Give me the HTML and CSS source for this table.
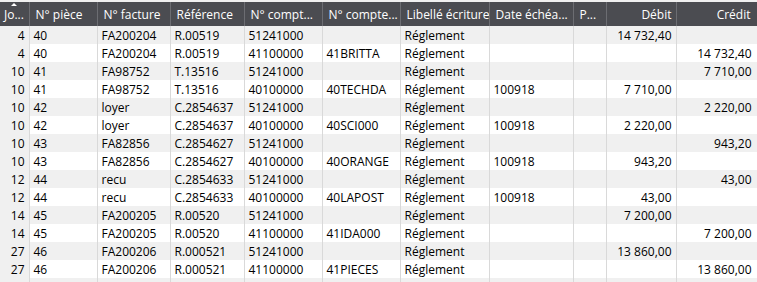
FILE: index.html
```html
<!DOCTYPE html>
<html lang="fr">
<head>
<meta charset="utf-8">
<title>Écritures</title>
<link rel="stylesheet" href="styles.css">
</head>
<body>
<div class="grid">
<table>
<colgroup>
<col class="w1"><col class="w2"><col class="w3"><col class="w4"><col class="w5"><col class="w6"><col class="w7"><col class="w8"><col class="w9"><col class="w10"><col class="w11">
</colgroup>
<thead>
<tr>
<th class="sorted"><span class="arrow"></span>Jo...</th>
<th>N° pièce</th>
<th>N° facture</th>
<th>Référence</th>
<th>N° compt...</th>
<th>N° compte...</th>
<th>Libellé écriture</th>
<th>Date échéa...</th>
<th>P...</th>
<th class="num">Débit</th>
<th class="num">Crédit</th>
</tr>
</thead>
<tbody>
<tr><td class="num">4</td><td>40</td><td>FA200204</td><td>R.00519</td><td>51241000</td><td></td><td>Réglement</td><td></td><td></td><td class="num">14 732,40</td><td class="num"></td></tr>
<tr><td class="num">4</td><td>40</td><td>FA200204</td><td>R.00519</td><td>41100000</td><td>41BRITTA</td><td>Réglement</td><td></td><td></td><td class="num"></td><td class="num">14 732,40</td></tr>
<tr><td class="num">10</td><td>41</td><td>FA98752</td><td>T.13516</td><td>51241000</td><td></td><td>Réglement</td><td></td><td></td><td class="num"></td><td class="num">7 710,00</td></tr>
<tr><td class="num">10</td><td>41</td><td>FA98752</td><td>T.13516</td><td>40100000</td><td>40TECHDA</td><td>Réglement</td><td>100918</td><td></td><td class="num">7 710,00</td><td class="num"></td></tr>
<tr><td class="num">10</td><td>42</td><td>loyer</td><td>C.2854637</td><td>51241000</td><td></td><td>Réglement</td><td></td><td></td><td class="num"></td><td class="num">2 220,00</td></tr>
<tr><td class="num">10</td><td>42</td><td>loyer</td><td>C.2854637</td><td>40100000</td><td>40SCI000</td><td>Réglement</td><td>100918</td><td></td><td class="num">2 220,00</td><td class="num"></td></tr>
<tr><td class="num">10</td><td>43</td><td>FA82856</td><td>C.2854627</td><td>51241000</td><td></td><td>Réglement</td><td></td><td></td><td class="num"></td><td class="num">943,20</td></tr>
<tr><td class="num">10</td><td>43</td><td>FA82856</td><td>C.2854627</td><td>40100000</td><td>40ORANGE</td><td>Réglement</td><td>100918</td><td></td><td class="num">943,20</td><td class="num"></td></tr>
<tr><td class="num">12</td><td>44</td><td>recu</td><td>C.2854633</td><td>51241000</td><td></td><td>Réglement</td><td></td><td></td><td class="num"></td><td class="num">43,00</td></tr>
<tr><td class="num">12</td><td>44</td><td>recu</td><td>C.2854633</td><td>40100000</td><td>40LAPOST</td><td>Réglement</td><td>100918</td><td></td><td class="num">43,00</td><td class="num"></td></tr>
<tr><td class="num">14</td><td>45</td><td>FA200205</td><td>R.00520</td><td>51241000</td><td></td><td>Réglement</td><td></td><td></td><td class="num">7 200,00</td><td class="num"></td></tr>
<tr><td class="num">14</td><td>45</td><td>FA200205</td><td>R.00520</td><td>41100000</td><td>41IDA000</td><td>Réglement</td><td></td><td></td><td class="num"></td><td class="num">7 200,00</td></tr>
<tr><td class="num">27</td><td>46</td><td>FA200206</td><td>R.000521</td><td>51241000</td><td></td><td>Réglement</td><td></td><td></td><td class="num">13 860,00</td><td class="num"></td></tr>
<tr><td class="num">27</td><td>46</td><td>FA200206</td><td>R.000521</td><td>41100000</td><td>41PIECES</td><td>Réglement</td><td></td><td></td><td class="num"></td><td class="num">13 860,00</td></tr>
<tr><td class="num"></td><td></td><td></td><td></td><td></td><td></td><td></td><td></td><td></td><td class="num"></td><td class="num"></td></tr>
</tbody>
</table>
</div>
</body>
</html>
```
FILE: styles.css
```css
html, body {
  margin: 0;
  padding: 0;
  background: #ffffff;
  overflow: hidden;
}
.grid {
  width: 757px;
  height: 282px;
  padding-top: 2px;
  box-sizing: border-box;
  background: #f0f0f0;
  overflow: hidden;
  font-family: "Open Sans", "Noto Sans", sans-serif;
  font-size: 12px;
  color: #000;
}
table {
  border-collapse: collapse;
  table-layout: fixed;
  width: 757px;
}
.w1 { width: 29px; }
.w2 { width: 68px; }
.w3 { width: 73px; }
.w4 { width: 74px; }
.w5 { width: 78px; }
.w6 { width: 78px; }
.w7 { width: 89px; }
.w8 { width: 84px; }
.w9 { width: 33px; }
.w10 { width: 70px; }
.w11 { width: 81px; }
th {
  height: 24px;
  padding: 0 4px 0 6px;
  background: #4b4c51;
  color: #ffffff;
  font-weight: normal;
  text-align: left;
  white-space: nowrap;
  overflow: hidden;
  border-right: 1px solid #6c6d72;
  box-sizing: border-box;
}
th.sorted {
  position: relative;
  padding-left: 4px;
}
th:last-child {
  border-right: 1px solid #2e2e32;
  padding-right: 6px;
}
th.num { text-align: right; }
.arrow {
  position: absolute;
  left: 11px;
  top: 1px;
  width: 0;
  height: 0;
  border-left: 3px solid transparent;
  border-right: 3px solid transparent;
  border-bottom: 3px solid #ffffff;
}
td {
  height: 18px;
  padding: 0 4px 0 4px;
  line-height: 17px;
  white-space: nowrap;
  overflow: hidden;
  border-right: 1px solid #d9d9d9;
  box-sizing: border-box;
  background: #ffffff;
}
td.num {
  text-align: right;
}
tbody tr:nth-child(odd) td {
  background: #f0f0f0;
}
tbody td:first-child {
  background: #f0f0f0;
  padding-right: 4px;
}
tbody td:last-child {
  padding-right: 5px;
}
```
